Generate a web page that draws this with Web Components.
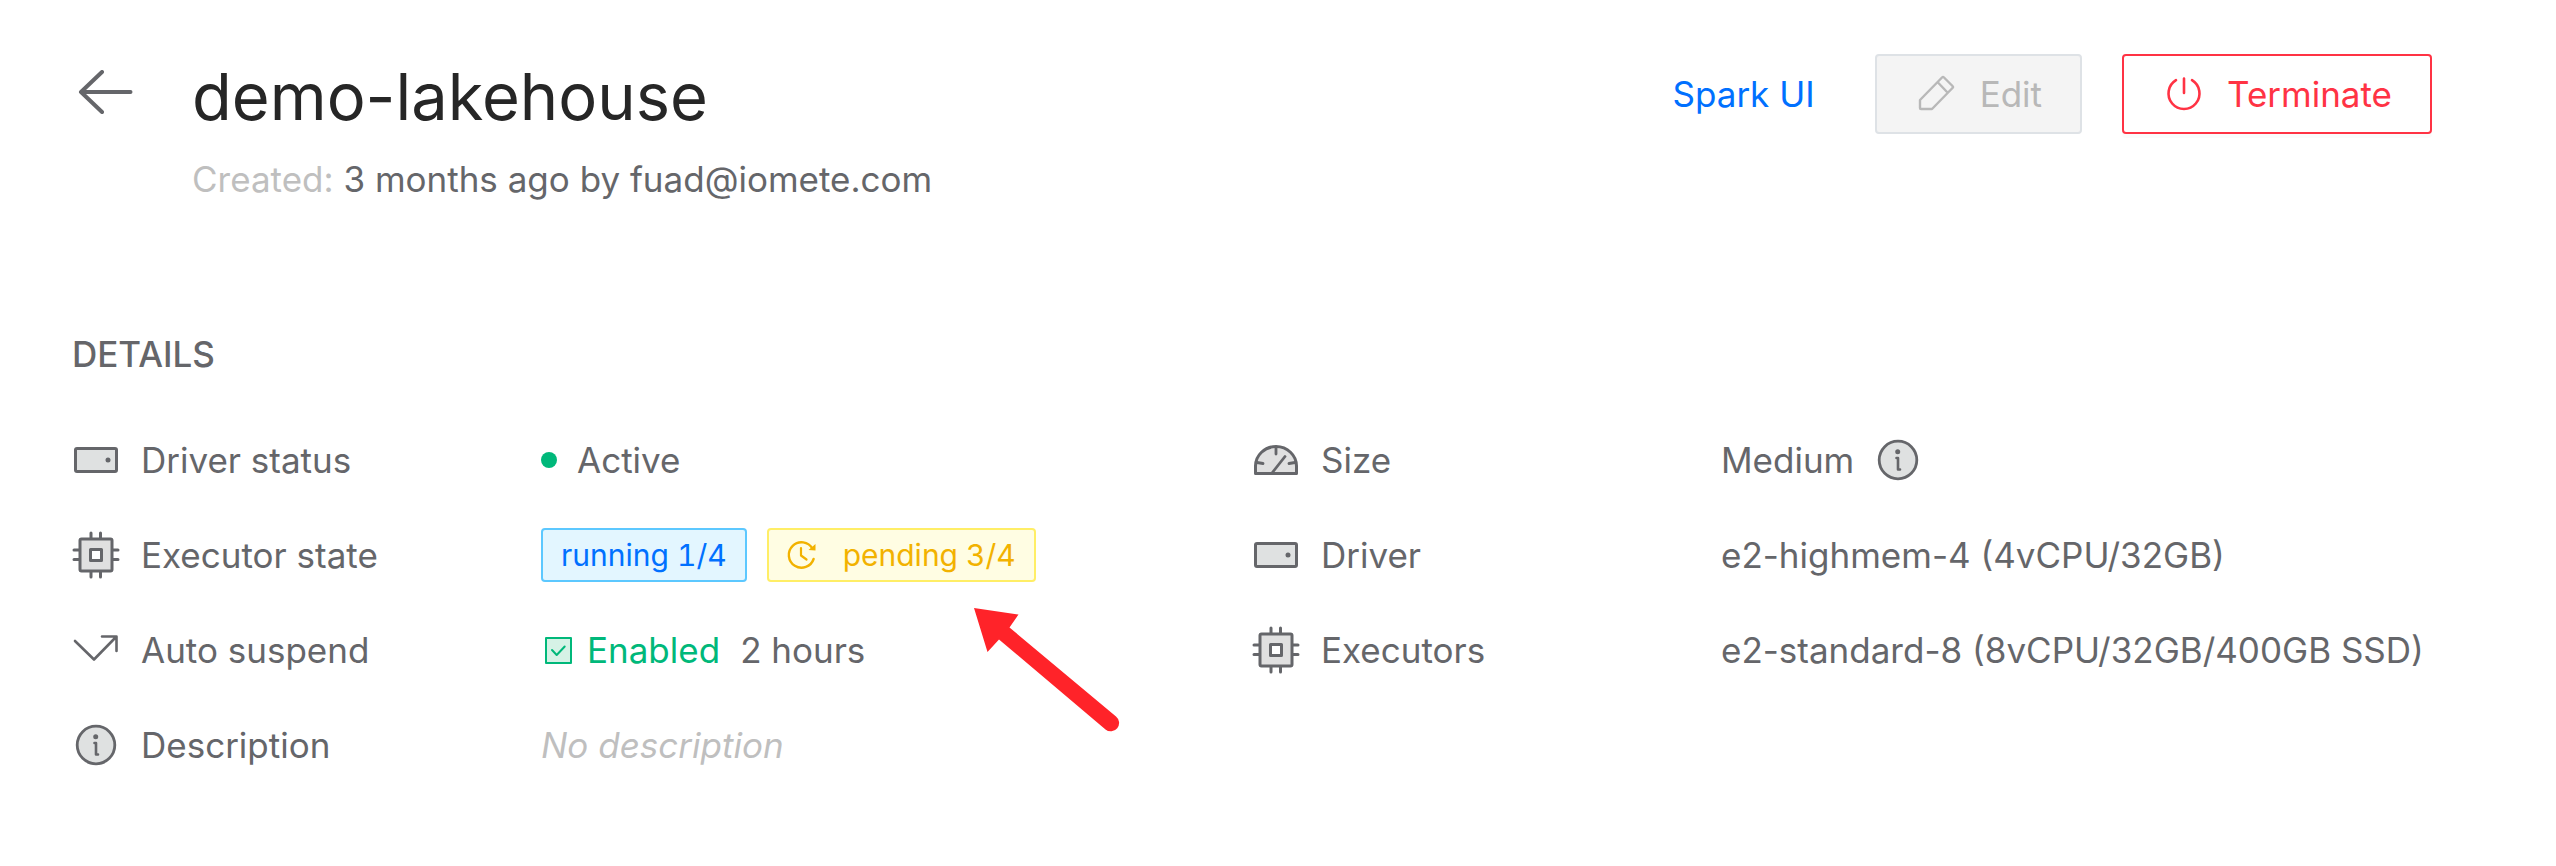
<!DOCTYPE html>
<html lang="en">
<head>
<meta charset="utf-8">
<title>demo-lakehouse</title>
<style>
body { margin: 0; background: #fff; color: #65666a; font: 35px/60px Inter, sans-serif; }
</style>
</head>
<body>
<lakehouse-page></lakehouse-page>
<script>
const ICONS = {
  back: ['56 44', '<path d="M52.500 22H3M24 2 3 22l21 20" stroke-width="4"/>'],
  drive: ['48 48', '<rect x="3.5" y="12.5" width="41" height="23" rx="1.5" fill="#dfe1e1" stroke-width="3"/><circle cx="36" cy="24" r="2.5" fill="currentColor" stroke="none"/>'],
  chip: ['48 48', '<path d="M19 2v5M28.5 2v5M19 41v5M28.5 41v5M2 19h5M2 28.5h5M41 19h5M41 28.5h5" stroke-width="3"/><rect x="8" y="8" width="32" height="32" rx="1.5" fill="#e0e0e0" stroke-width="3"/><rect x="18.5" y="18.5" width="11" height="11" fill="#fff" stroke-width="3"/>'],
  bounce: ['48 48', '<path d="M3 15 22 33.5 44 11M30 10.5h14.5V25" stroke-width="2.6"/>'],
  info: ['48 48', '<circle cx="24" cy="24" r="18.8" fill="#dfe1e1" stroke-width="2.8"/><circle cx="23.7" cy="15.7" r="2.5" fill="currentColor" stroke="none"/><path d="M22.5 22H24v11.5h2" stroke-width="2.6"/>'],
  gauge: ['48 48', '<path d="M3.5 37.5V30a20.500 19.500 0 0 1 41 0v7.5z" fill="#e0e0e0" stroke-width="3"/><path d="M24 11v7M5 26.5l6 1M43 26.5l-6 1M20 37l13-16.500" stroke-width="2.8"/>'],
  pencil: ['40 40', '<path d="M5 26 27 3.5q1-1 2 0l8.5 8.5q1 1 0 2L17 35H6q-1 0-1-1zM22.5 8 32 18" stroke-width="2.4"/>'],
  power: ['40 40', '<path d="M14 6.200a15.500 15.500 0 1 0 16 0M22 4.500V19" stroke-width="2.6"/>'],
  clock: ['32 32', '<path d="M25.5 9.600A12.700 12.700 0 1 0 26.600 20" stroke-width="2.4"/><path d="M28.500 5v6.500l-7-.5z" fill="currentColor" stroke="none"/><path d="M14 9v7.500l5.500 4" stroke-width="2.2"/>'],
  check: ['32 32', '<rect x="5" y="4" width="25" height="25" fill="#d6f2e6" stroke-width="2"/><path d="m11 16 4.700 5 8-8.500" stroke-width="2"/>']
};

function define(name, html, setup) {
  customElements.define(name, class extends HTMLElement {
    constructor() {
      super();
      const template = document.createElement('template');
      template.innerHTML = html;
      this.attachShadow({ mode: 'open' }).append(template.content.cloneNode(true));
    }
    connectedCallback() { if (setup) setup(this, this.shadowRoot); }
  });
}

define('ui-icon', `
  <style>
    :host { display: inline-flex; flex: none; }
    svg { display: block; fill: none; stroke: currentColor; stroke-linecap: round; stroke-linejoin: round; }
  </style><svg aria-hidden="true"></svg>`,
  (el, root) => {
    const [size, body] = ICONS[el.getAttribute('name')];
    const [w, h] = size.split(' ');
    const svg = root.querySelector('svg');
    svg.setAttribute('viewBox', '0 0 ' + size);
    svg.setAttribute('width', w);
    svg.setAttribute('height', h);
    svg.innerHTML = body;
  });

define('ui-button', `
  <style>
    :host { display: block; }
    button { display: flex; align-items: center; gap: 25px; box-sizing: border-box; height: 80px;
      padding: 0 38px; border: 2px solid #ff3344; border-radius: 4px; background: #fff; color: #ff3344;
      font: inherit; box-shadow: 0 4px 0 rgba(0,0,0,.016); }
    button:disabled { background: #f4f4f4; border-color: #dee2e6; color: #b8b8b8; box-shadow: none; }
  </style><button type="button"><slot></slot></button>`,
  (el, root) => { root.querySelector('button').disabled = el.hasAttribute('disabled'); });

define('status-tag', `
  <style>
    :host { display: flex; align-items: baseline; gap: 24px; position: relative; box-sizing: border-box; height: 54px; padding: 0 18px;
      border: 2px solid #5cc8ff; border-radius: 4px; background: #e3f6ff; color: #0070ff;
      font-size: 30px; line-height: 50px; font-variant-numeric: tabular-nums; }
    :host([tone=warning]) { border-color: #ffee66; background: #fffde3; color: #f2b200; }
    ::slotted(ui-icon) { align-self: center; }
  </style><slot></slot>`);

define('detail-item', `
  <style>
    :host { display: grid; grid-template-columns: 469px 1fr; align-items: center; height: 95px; }
    .label { display: flex; align-items: center; gap: 21px; }
    .value { display: flex; align-items: baseline; gap: 20px; white-space: nowrap; }
  </style>
  <div class="label"><slot name="icon"></slot><slot name="label"></slot></div>
  <div class="value"><slot></slot></div>`);

define('page-header', `
  <style>
    :host { display: flex; align-items: flex-start; }
    .back { display: flex; align-items: center; width: 120px; height: 76px; padding: 0 0 0 6px; box-sizing: border-box; color: #65666a; }
    .text { flex: 1; }
    h1 { margin: 0 0 9px; color: #262626; font-size: 65px; font-weight: 400; line-height: 86px; }
    p { margin: 0; }
    .muted { color: #bfbfbf; }
    .actions { display: flex; align-items: center; gap: 40px; }
    .link { padding: 0 20px; color: #0070ff; text-decoration: none; }
  </style>
  <a class="back" href="#" aria-label="Back"><ui-icon name="back"></ui-icon></a>
  <div class="text">
    <h1>demo-lakehouse</h1>
    <p><span class="muted">Created:</span> 3 months ago by fuad@iomete.com</p>
  </div>
  <div class="actions">
    <a class="link" href="#">Spark UI</a>
    <ui-button disabled><ui-icon name="pencil"></ui-icon>Edit</ui-button>
    <ui-button><ui-icon name="power"></ui-icon>Terminate</ui-button>
  </div>`);

define('pointer-arrow', `
  <style>
    :host { position: absolute; left: 203px; top: 76px; }
    svg { display: block; }
  </style>
  <svg width="150" height="130" viewBox="0 0 150 130" aria-hidden="true"><path fill="#ff2329" d="M2 2 46.500 8.500 37.500 21.500 144 110.500a8.300 8.300 0 0 1-10.500 13L27 33.500 15.500 46z"/></svg>`);

define('lakehouse-page', `
  <style>
    :host { display: block; padding: 54px 124px 60px 72px; }
    h2 { margin: 115px 0 28px; font-size: 35px; font-weight: 500; line-height: 60px; }
    .columns { display: grid; grid-template-columns: minmax(0, 1fr) minmax(0, 1fr); }
    .dot { width: 16px; height: 16px; border-radius: 50%; background: #00b87a; align-self: center; }
    .enabled { display: flex; align-items: baseline; gap: 14px; color: #00b87a; }
    .enabled ui-icon { align-self: center; }
    .none { color: #bfbfbf; font-style: italic; }
    .size-info { align-self: center; }
  </style>
  <page-header></page-header>
  <h2>DETAILS</h2>
  <div class="columns">
    <div>
      <detail-item><ui-icon slot="icon" name="drive"></ui-icon><span slot="label">Driver status</span><span class="dot"></span><span>Active</span></detail-item>
      <detail-item><ui-icon slot="icon" name="chip"></ui-icon><span slot="label">Executor state</span>
        <status-tag>running 1/4</status-tag>
        <status-tag tone="warning"><ui-icon name="clock"></ui-icon><span>pending 3/4</span><pointer-arrow></pointer-arrow></status-tag>
      </detail-item>
      <detail-item><ui-icon slot="icon" name="bounce"></ui-icon><span slot="label">Auto suspend</span>
        <span class="enabled"><ui-icon name="check"></ui-icon><span>Enabled</span></span><span>2 hours</span>
      </detail-item>
      <detail-item><ui-icon slot="icon" name="info"></ui-icon><span slot="label">Description</span><span class="none">No description</span></detail-item>
    </div>
    <div>
      <detail-item><ui-icon slot="icon" name="gauge"></ui-icon><span slot="label">Size</span><span>Medium</span><ui-icon class="size-info" name="info"></ui-icon></detail-item>
      <detail-item><ui-icon slot="icon" name="drive"></ui-icon><span slot="label">Driver</span><span>e2-highmem-4 (4vCPU/32GB)</span></detail-item>
      <detail-item><ui-icon slot="icon" name="chip"></ui-icon><span slot="label">Executors</span><span>e2-standard-8 (8vCPU/32GB/400GB SSD)</span></detail-item>
    </div>
  </div>`);
</script>
</body>
</html>
